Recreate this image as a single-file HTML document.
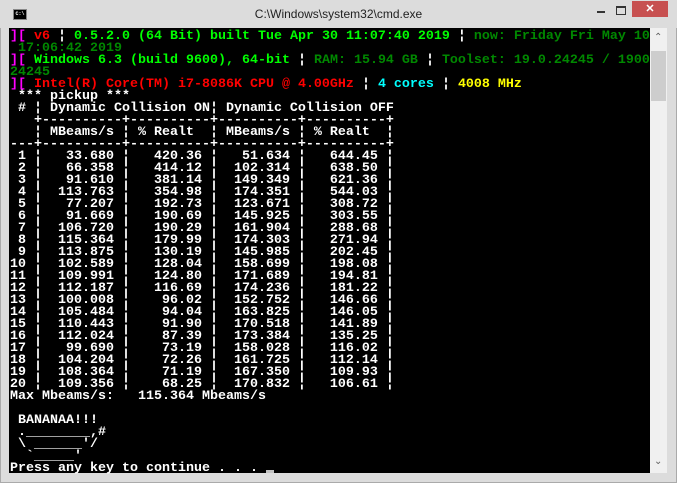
<!DOCTYPE html>
<html><head><meta charset="utf-8"><style>
html,body{margin:0;padding:0;width:677px;height:483px;overflow:hidden;background:#d9d9d9;}
.frame{position:absolute;left:0;top:0;width:675px;height:481px;border:1px solid #aaa;background:#dcdcdc;}
.title{position:absolute;left:0;top:0;width:677px;height:28px;background:#dcdcdc;}
.ttext{position:absolute;left:0;width:677px;top:7px;text-align:center;font:12px "Liberation Sans",sans-serif;color:#222;}
.icon{position:absolute;left:13px;top:9px;width:14px;height:11px;background:#000;border:1px solid #888;box-sizing:border-box;color:#fff;font:bold 5px "Liberation Mono",monospace;line-height:9px;text-align:center;}
.close{position:absolute;left:632px;top:1px;width:36px;height:16px;background:#c75050;color:#fff;text-align:center;font:bold 11px "Liberation Sans",sans-serif;line-height:16px;}
.max{position:absolute;left:616px;top:6px;width:8px;height:6px;border:1px solid #333;border-top-width:2px;}
.min{position:absolute;left:597px;top:11px;width:8px;height:2px;background:#333;}
.con{position:absolute;left:9px;top:28px;width:641px;height:445px;background:#000;}
.sb{position:absolute;left:650px;top:28px;width:17px;height:445px;background:#f0f0f0;}
.thumb{position:absolute;left:1px;top:23px;width:15px;height:50px;background:#cdcdcd;}
.arr{position:absolute;left:4px;font:10px "DejaVu Sans",sans-serif;color:#606060;}
pre{position:absolute;left:10px;top:31px;margin:0;font:bold 13.33px/12px "Liberation Mono",monospace;color:#c0c0c0;white-space:pre;}
.w{color:#fff}.m{color:#f0f}.r{color:#f00}.g{color:#0f0}.d{color:#080}.c{color:#0ff}.y{color:#ff0}
.cur{display:inline-block;width:8px;height:3px;background:#c0c0c0;vertical-align:-2px;}
</style></head><body>
<div class="frame"></div>
<div class="title"><div class="icon">C:\</div><div class="ttext">C:\Windows\system32\cmd.exe</div><div class="min"></div><div class="max"></div><div class="close">✕</div></div>
<div class="con"></div>
<div class="sb"><div class="arr" style="top:4px">&#8963;</div><div class="thumb"></div><div class="arr" style="top:428px">&#8964;</div></div>
<pre><span class="m">][</span> <span class="r">v6</span> <span class="w">¦</span> <span class="g">0.5.2.0 (64 Bit) built Tue Apr 30 11:07:40 2019</span> <span class="w">¦</span> <span class="d">now: Friday Fri May 10
 17:06:42 2019</span>
<span class="m">][</span> <span class="g">Windows 6.3 (build 9600), 64-bit</span> <span class="w">¦</span> <span class="d">RAM: 15.94 GB</span> <span class="w">¦</span> <span class="d">Toolset: 19.0.24245 / 1900
24245</span>
<span class="m">][</span> <span class="r">Intel(R) Core(TM) i7-8086K CPU @ 4.00GHz</span> <span class="w">¦</span> <span class="c">4 cores</span> <span class="w">¦</span> <span class="y">4008 MHz</span>
<span class="w"> *** pickup ***
 # ¦ Dynamic Collision ON¦ Dynamic Collision OFF
   +----------+----------+----------+----------+
   ¦ MBeams/s ¦ % Realt  ¦ MBeams/s ¦ % Realt  ¦
---+----------+----------+----------+----------+
 1 ¦   33.680 ¦   420.36 ¦   51.634 ¦   644.45 ¦
 2 ¦   66.358 ¦   414.12 ¦  102.314 ¦   638.50 ¦
 3 ¦   91.610 ¦   381.14 ¦  149.349 ¦   621.36 ¦
 4 ¦  113.763 ¦   354.98 ¦  174.351 ¦   544.03 ¦
 5 ¦   77.207 ¦   192.73 ¦  123.671 ¦   308.72 ¦
 6 ¦   91.669 ¦   190.69 ¦  145.925 ¦   303.55 ¦
 7 ¦  106.720 ¦   190.29 ¦  161.904 ¦   288.68 ¦
 8 ¦  115.364 ¦   179.99 ¦  174.303 ¦   271.94 ¦
 9 ¦  113.875 ¦   130.19 ¦  145.985 ¦   202.45 ¦
10 ¦  102.589 ¦   128.04 ¦  158.699 ¦   198.08 ¦
11 ¦  109.991 ¦   124.80 ¦  171.689 ¦   194.81 ¦
12 ¦  112.187 ¦   116.69 ¦  174.236 ¦   181.22 ¦
13 ¦  100.008 ¦    96.02 ¦  152.752 ¦   146.66 ¦
14 ¦  105.484 ¦    94.04 ¦  163.825 ¦   146.05 ¦
15 ¦  110.443 ¦    91.90 ¦  170.518 ¦   141.89 ¦
16 ¦  112.024 ¦    87.39 ¦  173.384 ¦   135.25 ¦
17 ¦   99.690 ¦    73.19 ¦  158.028 ¦   116.02 ¦
18 ¦  104.204 ¦    72.26 ¦  161.725 ¦   112.14 ¦
19 ¦  108.364 ¦    71.19 ¦  167.350 ¦   109.93 ¦
20 ¦  109.356 ¦    68.25 ¦  170.832 ¦   106.61 ¦
Max Mbeams/s:   115.364 Mbeams/s

 BANANAA!!!
 .________,#
 \ ______'/
  `_____'
Press any key to continue . . . <span class="cur"></span></span></pre>
</body></html>
